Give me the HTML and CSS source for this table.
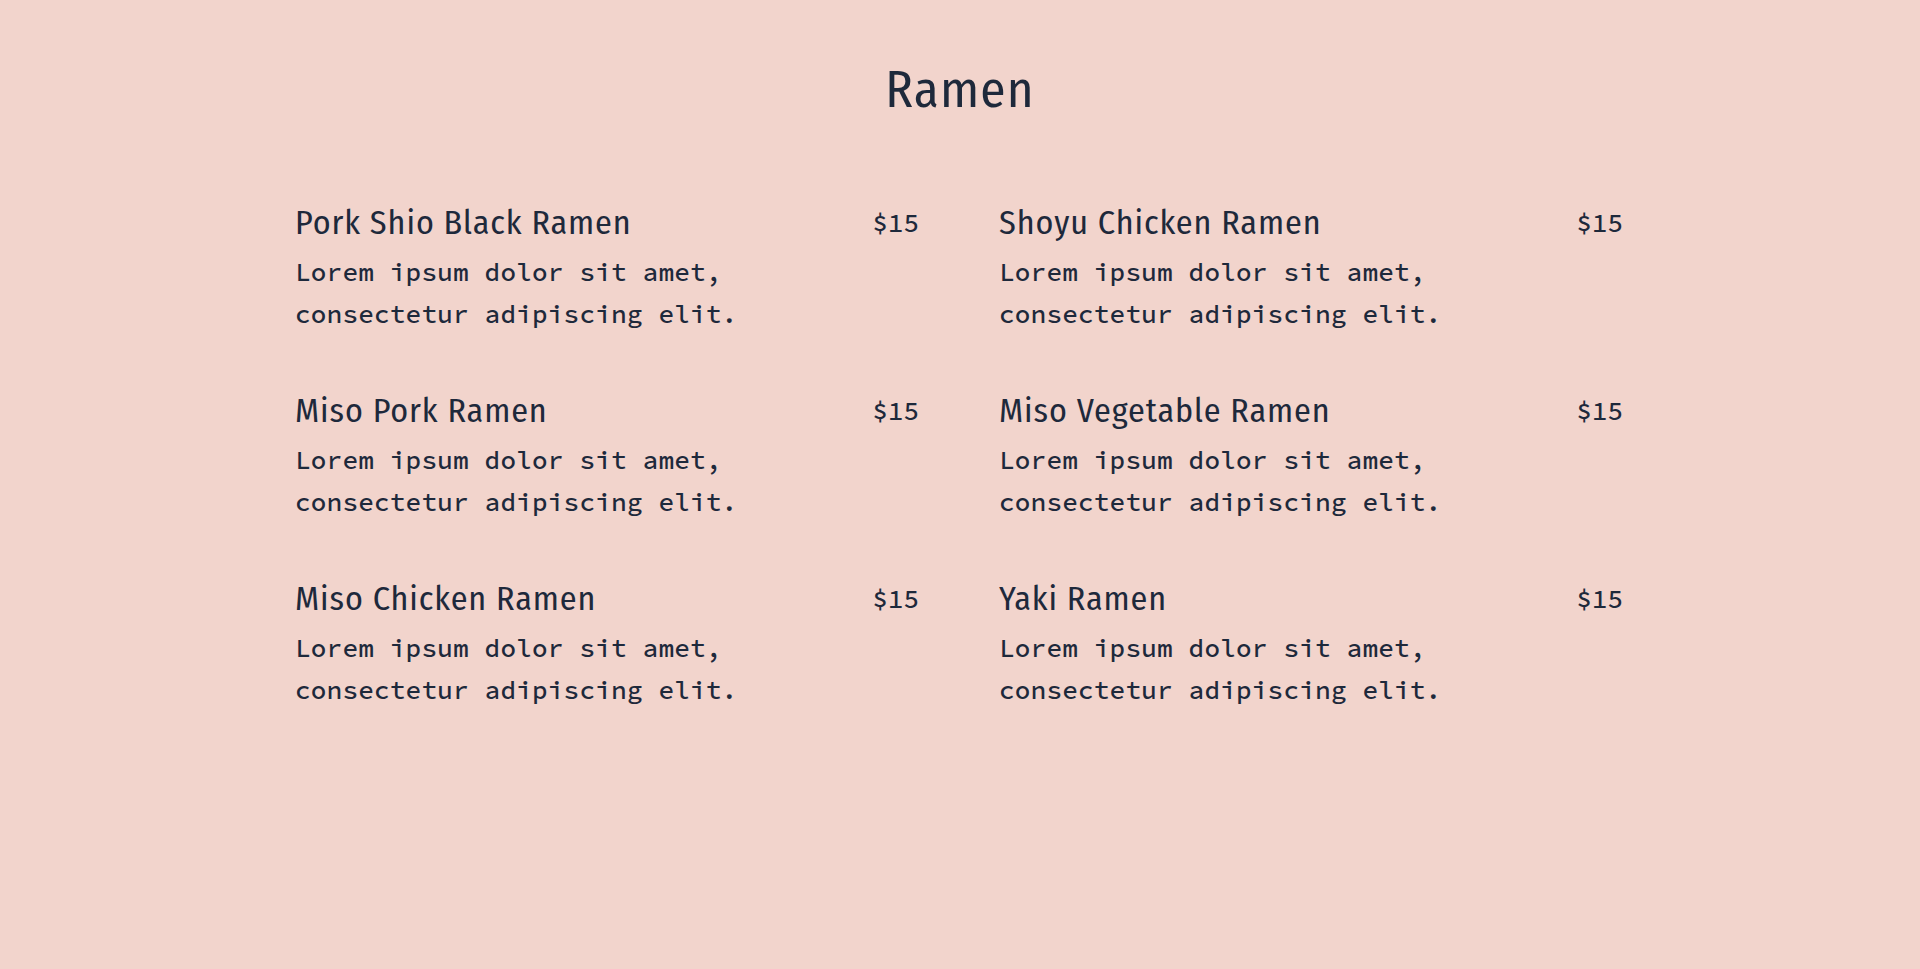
FILE: index.html
```html
<!DOCTYPE html>
<html lang="en">
<head>
<meta charset="utf-8">
<title>Ramen</title>
<link rel="stylesheet" href="styles.css">
</head>
<body>
<main class="menu">
  <h1 class="menu-title">Ramen</h1>
  <section class="menu-grid">
    <article class="item">
      <div class="item-head"><h2 class="item-name">Pork Shio Black Ramen</h2><span class="item-price">$15</span></div>
      <p class="item-desc">Lorem ipsum dolor sit amet, consectetur adipiscing elit.</p>
    </article>
    <article class="item">
      <div class="item-head"><h2 class="item-name">Shoyu Chicken Ramen</h2><span class="item-price">$15</span></div>
      <p class="item-desc">Lorem ipsum dolor sit amet, consectetur adipiscing elit.</p>
    </article>
    <article class="item">
      <div class="item-head"><h2 class="item-name">Miso Pork Ramen</h2><span class="item-price">$15</span></div>
      <p class="item-desc">Lorem ipsum dolor sit amet, consectetur adipiscing elit.</p>
    </article>
    <article class="item">
      <div class="item-head"><h2 class="item-name">Miso Vegetable Ramen</h2><span class="item-price">$15</span></div>
      <p class="item-desc">Lorem ipsum dolor sit amet, consectetur adipiscing elit.</p>
    </article>
    <article class="item">
      <div class="item-head"><h2 class="item-name">Miso Chicken Ramen</h2><span class="item-price">$15</span></div>
      <p class="item-desc">Lorem ipsum dolor sit amet, consectetur adipiscing elit.</p>
    </article>
    <article class="item">
      <div class="item-head"><h2 class="item-name">Yaki Ramen</h2><span class="item-price">$15</span></div>
      <p class="item-desc">Lorem ipsum dolor sit amet, consectetur adipiscing elit.</p>
    </article>
  </section>
</main>
</body>
</html>
```
FILE: styles.css
```css
html, body {
  margin: 0;
  padding: 0;
}
body {
  background: #f2d4cc;
  color: #1e293b;
  min-height: 969px;
}
.menu {
  padding-top: 60px;
}
.menu-title {
  margin: 0 0 83px;
  text-align: center;
  font-family: "Fira Sans Condensed", "Roboto", sans-serif;
  font-weight: 400;
  font-size: 51px;
  line-height: 60px;
  letter-spacing: 1.2px;
}
.menu-grid {
  width: 1328px;
  margin-left: calc(50% - 665px);
  display: grid;
  grid-template-columns: 1fr 1fr;
  column-gap: 80px;
  row-gap: 56px;
}
.item-head {
  display: flex;
  justify-content: space-between;
  align-items: flex-start;
  margin-bottom: 8px;
}
.item-name {
  margin: 0;
  font-family: "Fira Sans Condensed", "Roboto", sans-serif;
  font-weight: 400;
  font-size: 34px;
  line-height: 40px;
  letter-spacing: 0.9px;
}
.item-price {
  font-family: "Source Code Pro", "DejaVu Sans Mono", monospace;
  font-weight: 500;
  font-size: 26px;
  line-height: 40px;
}
.item-desc {
  margin: 0;
  max-width: 460px;
  font-family: "Source Code Pro", "DejaVu Sans Mono", monospace;
  font-weight: 500;
  font-size: 26px;
  line-height: 42px;
  letter-spacing: 0.2px;
}
```
